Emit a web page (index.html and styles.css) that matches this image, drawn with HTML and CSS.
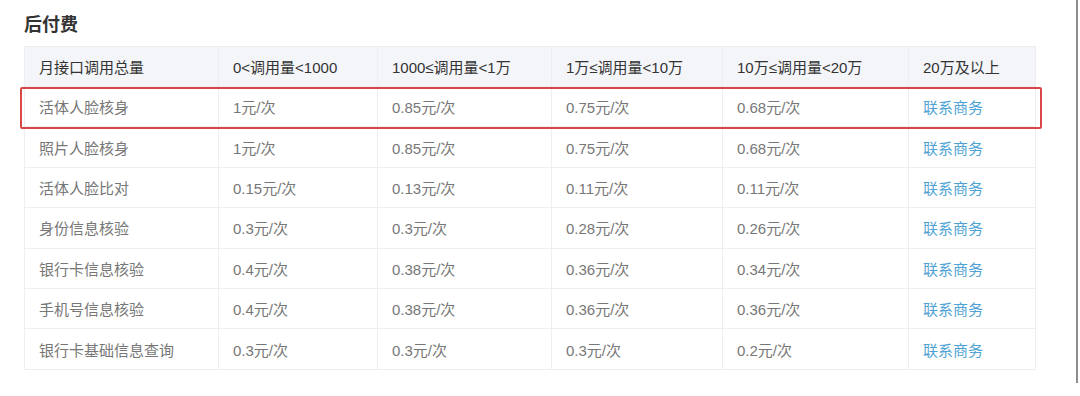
FILE: index.html
```
<!DOCTYPE html>
<html lang="zh-CN">
<head>
  <meta charset="UTF-8" />
  <title>后付费</title>
  <link rel="stylesheet" href="styles.css">
</head>
<body>

<div class="panel">
  <h2 class="title">后付费</h2>

  <div class="table-wrap">
    <table class="price">
      <colgroup>
        <col style="width:194px">
        <col style="width:159px">
        <col style="width:174px">
        <col style="width:171px">
        <col style="width:186px">
        <col style="width:127px">
      </colgroup>
      <thead>
        <tr>
          <th>月接口调用总量</th>
          <th>0&lt;调用量&lt;1000</th>
          <th>1000≤调用量&lt;1万</th>
          <th>1万≤调用量&lt;10万</th>
          <th>10万≤调用量&lt;20万</th>
          <th>20万及以上</th>
        </tr>
      </thead>
      <tbody>
        <tr>
          <td>活体人脸核身</td>
          <td>1元/次</td>
          <td>0.85元/次</td>
          <td>0.75元/次</td>
          <td>0.68元/次</td>
          <td><a href="#">联系商务</a></td>
        </tr>
        <tr>
          <td>照片人脸核身</td>
          <td>1元/次</td>
          <td>0.85元/次</td>
          <td>0.75元/次</td>
          <td>0.68元/次</td>
          <td><a href="#">联系商务</a></td>
        </tr>
        <tr>
          <td>活体人脸比对</td>
          <td>0.15元/次</td>
          <td>0.13元/次</td>
          <td>0.11元/次</td>
          <td>0.11元/次</td>
          <td><a href="#">联系商务</a></td>
        </tr>
        <tr>
          <td>身份信息核验</td>
          <td>0.3元/次</td>
          <td>0.3元/次</td>
          <td>0.28元/次</td>
          <td>0.26元/次</td>
          <td><a href="#">联系商务</a></td>
        </tr>
        <tr>
          <td>银行卡信息核验</td>
          <td>0.4元/次</td>
          <td>0.38元/次</td>
          <td>0.36元/次</td>
          <td>0.34元/次</td>
          <td><a href="#">联系商务</a></td>
        </tr>
        <tr>
          <td>手机号信息核验</td>
          <td>0.4元/次</td>
          <td>0.38元/次</td>
          <td>0.36元/次</td>
          <td>0.36元/次</td>
          <td><a href="#">联系商务</a></td>
        </tr>
        <tr>
          <td>银行卡基础信息查询</td>
          <td>0.3元/次</td>
          <td>0.3元/次</td>
          <td>0.3元/次</td>
          <td>0.2元/次</td>
          <td><a href="#">联系商务</a></td>
        </tr>
      </tbody>
    </table>
    <!-- highlight box over the first row -->
    <div class="highlight"></div>
  </div>
</div>

</body>
</html>
```

FILE: styles.css
```
body {
  margin: 0;
  background: #fff;
  font-family: "Liberation Sans", "Noto Sans CJK SC", sans-serif;
}
.panel {
  width: 1078px;
  height: 383px;
  box-sizing: border-box;
  border-right: 2px solid #8c8c8c;
  padding: 12px 0 0 24px;
}
.title {
  margin: 0 0 8px 0;
  font-size: 18px;
  line-height: 26px;
  font-weight: bold;
  color: #333;
}
.table-wrap {
  position: relative;
  width: 1011px;
}
.price {
  border-collapse: collapse;
  table-layout: fixed;
  width: 1011px;
  font-size: 15px;
}
.price th, .price td {
  border: 1px solid #eceef2;
  height: 39.4px;
  padding: 0 0 0 14px;
  text-align: left;
  white-space: nowrap;
}
.price th {
  background: #f4f5f8;
  color: #333;
  font-weight: normal;
  height: 39px;
}
.price td {
  color: #777;
  background: #fff;
}
.price a {
  color: #4ea3d4;
  text-decoration: none;
}
.highlight {
  position: absolute;
  left: -4px;
  top: 41px;
  width: 1018px;
  height: 38px;
  border: 2px solid #d9474a;
  border-radius: 2px;
}
```
